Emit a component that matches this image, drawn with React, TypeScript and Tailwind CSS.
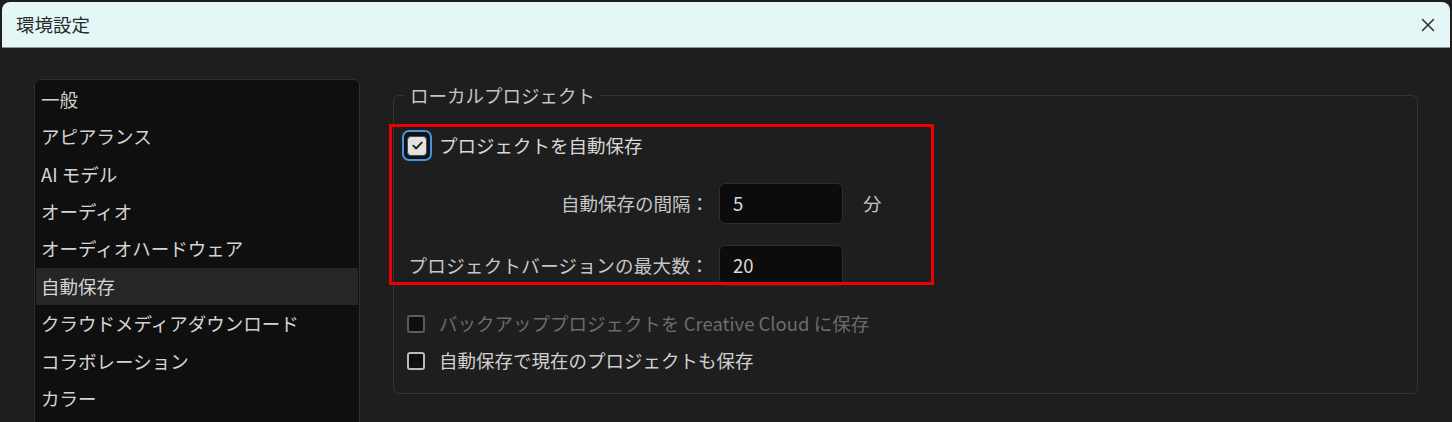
import { X } from "lucide-react";

const sidebarItems = [
  "一般",
  "アピアランス",
  "AI モデル",
  "オーディオ",
  "オーディオハードウェア",
  "自動保存",
  "クラウドメディアダウンロード",
  "コラボレーション",
  "カラー",
];

function CheckedBox() {
  return (
    <div className="w-[30px] h-[31px] rounded-[7px] border-[2.5px] border-[#3f95e6] bg-[#121212] p-[2px] flex items-center justify-center">
      <div className="w-[20px] h-[20px] rounded-[4px] bg-[#e2e2e2] border border-[#4a4a4a] flex items-center justify-center">
        <svg width="13" height="13" viewBox="0 0 14 14" fill="none">
          <path
            d="M2.5 7.2 L5.6 10.2 L11.5 3.8"
            stroke="#1a1a1a"
            strokeWidth="2"
            strokeLinecap="round"
            strokeLinejoin="round"
          />
        </svg>
      </div>
    </div>
  );
}

function EmptyBox({ disabled }: { disabled?: boolean }) {
  return (
    <div
      className={
        disabled
          ? "w-[18px] h-[18px] rounded-[3px] border-2 border-[#5c5c5c] bg-[#0e0e0e]"
          : "w-[18px] h-[18px] rounded-[3px] border-2 border-[#b9b9b9] bg-[#0e0e0e]"
      }
    />
  );
}

export default function App() {
  return (
    <div
      className="relative w-[1452px] h-[422px] overflow-hidden bg-[#1e1e1e] text-[18.5px]"
      style={{ fontFamily: '"Noto Sans CJK JP", "Noto Sans", sans-serif' }}
    >
      {/* title bar */}
      <div className="mt-[2px] mx-[2px] h-[46px] rounded-t-[8px] bg-[#e4f7f6] border-b border-[#8c9696] flex items-center justify-between pl-[14px] pr-[11px]">
        <span className="text-[#2a2a2a] leading-none">環境設定</span>
        <X className="size-[22px] text-[#2b2b2b]" strokeWidth={1.6} />
      </div>

      <div className="flex items-start pl-[34px] pr-[34px] pt-[31px] gap-[33px]">
        {/* sidebar */}
        <div className="w-[326px] h-[400px] shrink-0 rounded-[6px] border border-[#2f2f2f] bg-[#0f0f0f] p-[1px]">
          {sidebarItems.map((item) => (
            <div
              key={item}
              className={
                item === "自動保存"
                  ? "h-[37.4px] flex items-center pl-[5px] bg-[#262626] text-[#d4d4d4]"
                  : "h-[37.4px] flex items-center pl-[5px] text-[#d4d4d4]"
              }
            >
              {item}
            </div>
          ))}
        </div>

        {/* local project group */}
        <fieldset className="flex-1 mt-[3px] h-[312px] rounded-[6px] border border-[#343434] pl-[8px] pr-4">
          <legend className="ml-[3px] px-[5px] leading-[26px] text-[#c4c4c4]">
            ローカルプロジェクト
          </legend>

          <div className="mt-[22px] h-[31px] flex items-center gap-[7px] text-[#d8d8d8]">
            <CheckedBox />
            <span>プロジェクトを自動保存</span>
          </div>

          <div className="mt-[22px] flex items-center">
            <span className="w-[307px] text-right text-[#c6c6c6]">自動保存の間隔：</span>
            <div className="ml-[10px] w-[124px] h-[41px] rounded-[6px] border border-[#2e2e2e] bg-[#0c0c0c] flex items-center pl-[13px] text-[#dcdcdc]">
              5
            </div>
            <span className="ml-[20px] text-[#c6c6c6]">分</span>
          </div>

          <div className="mt-[21px] flex items-center">
            <span className="w-[307px] text-right text-[#c6c6c6] whitespace-nowrap tracking-[0.3px]">
              プロジェクトバージョンの最大数：
            </span>
            <div className="ml-[10px] w-[124px] h-[41px] rounded-[6px] border border-[#2e2e2e] bg-[#0c0c0c] flex items-center pl-[13px] text-[#dcdcdc]">
              20
            </div>
          </div>

          <div className="mt-[25px] h-[26px] flex items-center pl-[5px] gap-[14px] text-[#6c6c6c]">
            <EmptyBox disabled />
            <span>バックアッププロジェクトを Creative Cloud に保存</span>
          </div>

          <div className="mt-[11px] h-[26px] flex items-center pl-[5px] gap-[14px] text-[#d0d0d0]">
            <EmptyBox />
            <span>自動保存で現在のプロジェクトも保存</span>
          </div>
        </fieldset>
      </div>

      {/* red annotation frame */}
      <div className="absolute left-[389px] top-[124px] w-[545px] h-[161px] border-[3px] border-[#ee0000] pointer-events-none" />
    </div>
  );
}
